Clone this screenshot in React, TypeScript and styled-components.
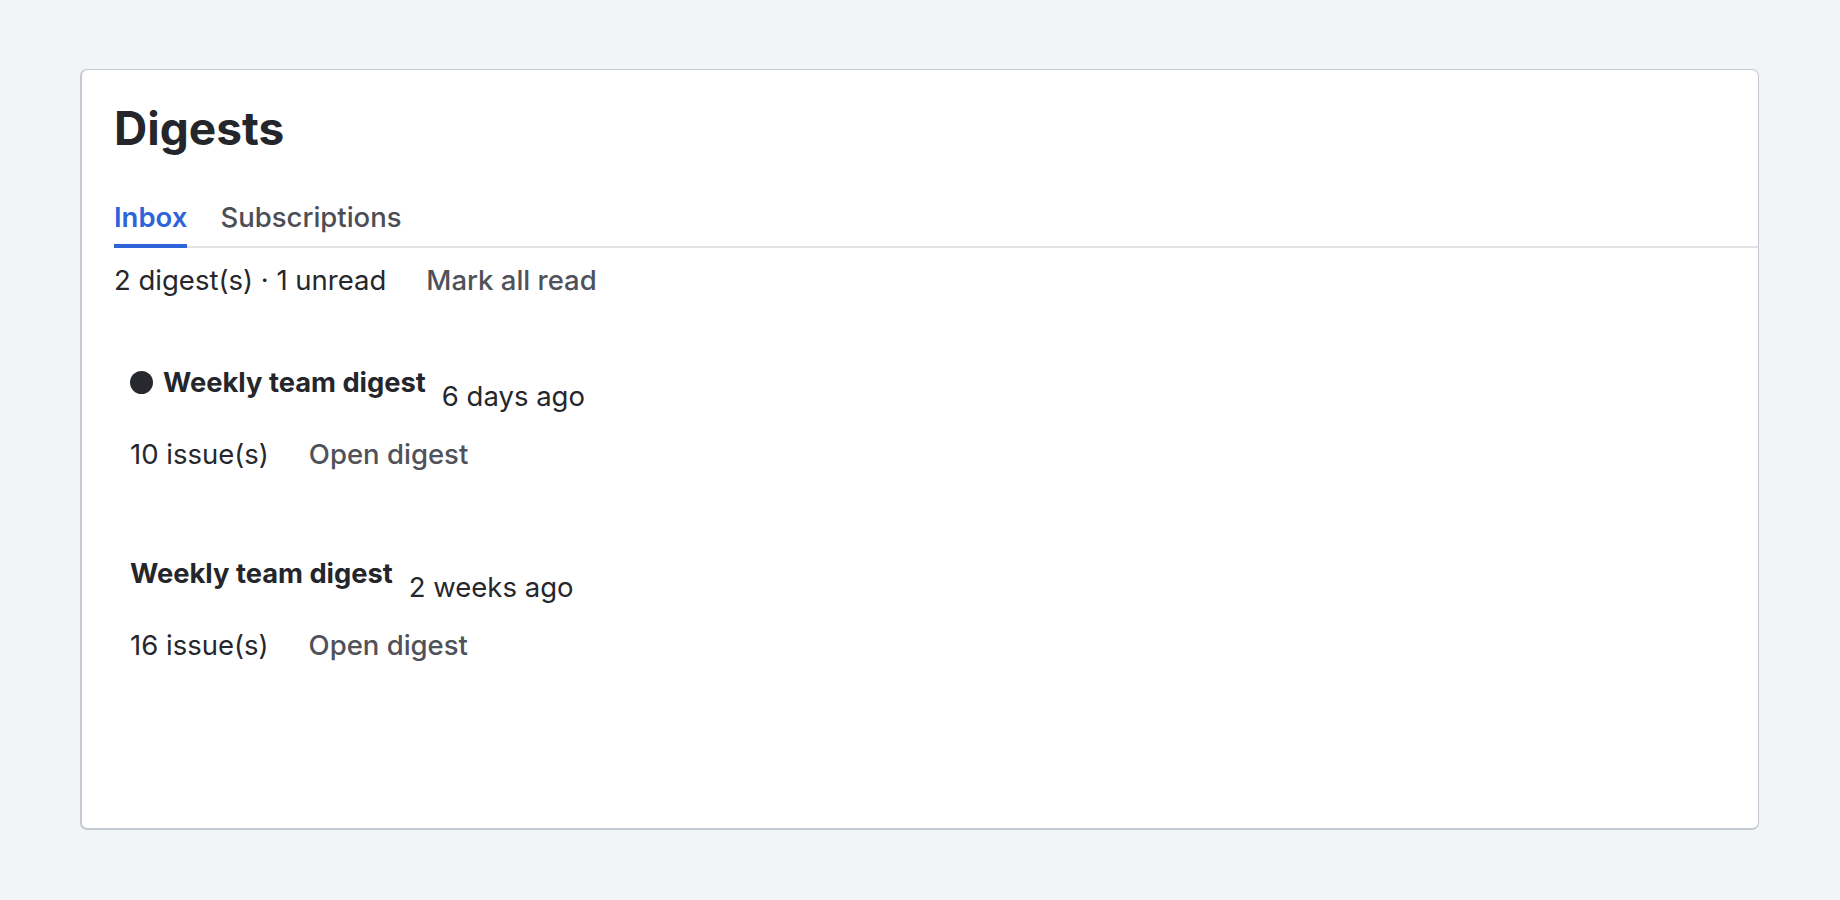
import React from "react";
import styled, { createGlobalStyle } from "styled-components";

const Global = createGlobalStyle`
  html, body { margin: 0; padding: 0; background: #f3f4f6; }
  body { font-family: Inter, "Noto Sans", sans-serif; color: #25272c; }
  * { box-sizing: border-box; }
`;

const Page = styled.div`
  height: 900px;
  padding: 69px 81px 70px 80px;
  display: flex;
`;

const Card = styled.section`
  flex: 1;
  background: #ffffff;
  border: 1px solid #c4cad3;
  border-left-width: 2px;
  border-bottom-width: 2px;
  border-radius: 7px;
  padding: 30px 0 0 32px;
  display: flex;
  flex-direction: column;
`;

const Title = styled.h1`
  margin: 0;
  font-size: 46px;
  font-weight: 700;
  line-height: normal;
  color: #24262b;
`;

const TabBar = styled.nav`
  margin-top: 34px;
  display: flex;
  gap: 33px;
  border-bottom: 2px solid #e0e2e6;
`;

const Tab = styled.button<{ $active?: boolean }>`
  appearance: none;
  background: none;
  border: none;
  border-bottom: 4px solid ${(p) => (p.$active ? "#2f64d9" : "transparent")};
  margin-bottom: -2px;
  padding: 10px 0 10px;
  font-family: inherit;
  font-size: 27.5px;
  font-weight: ${(p) => (p.$active ? 600 : 500)};
  line-height: normal;
  color: ${(p) => (p.$active ? "#2f64d9" : "#4b4e56")};
  cursor: pointer;
`;

const Summary = styled.div`
  margin-top: 15px;
  display: flex;
  align-items: baseline;
  gap: 40px;
  font-size: 27.5px;
  line-height: normal;
`;

const LinkButton = styled.button`
  appearance: none;
  background: none;
  border: none;
  padding: 0;
  font-family: inherit;
  font-size: 27.5px;
  font-weight: 500;
  line-height: normal;
  color: #4f525a;
  cursor: pointer;
`;

const List = styled.ul`
  list-style: none;
  margin: 53px 0 0;
  padding: 0;
  display: flex;
  flex-direction: column;
  gap: 54px;
`;

const Item = styled.li`
  padding: 16px;
  display: flex;
  flex-direction: column;
  gap: 24px;
`;

const ItemHead = styled.div`
  display: flex;
  align-items: flex-start;
  gap: 16px;
`;

const ItemTitle = styled.h3`
  margin: 0;
  display: flex;
  align-items: center;
  gap: 10px;
  font-size: 27.3px;
  font-weight: 700;
  line-height: normal;
  color: #24262b;
`;

const UnreadDot = styled.span`
  width: 23px;
  height: 23px;
  border-radius: 50%;
  background: #27292e;
  flex: none;
`;

const Time = styled.span`
  margin-top: 13px;
  font-size: 27.5px;
  line-height: normal;
`;

const Meta = styled.div`
  display: flex;
  align-items: baseline;
  gap: 40px;
  font-size: 27.5px;
  line-height: normal;
`;

const digests = [
  { id: 1, title: "Weekly team digest", time: "6 days ago", issues: 10, unread: true },
  { id: 2, title: "Weekly team digest", time: "2 weeks ago", issues: 16, unread: false },
];

export default function App() {
  return (
    <>
      <Global />
      <Page>
        <Card>
          <Title>Digests</Title>
          <TabBar>
            <Tab $active>Inbox</Tab>
            <Tab>Subscriptions</Tab>
          </TabBar>
          <Summary>
            <span>2 digest(s) · 1 unread</span>
            <LinkButton>Mark all read</LinkButton>
          </Summary>
          <List>
            {digests.map((d) => (
              <Item key={d.id}>
                <ItemHead>
                  <ItemTitle>
                    {d.unread && <UnreadDot />}
                    {d.title}
                  </ItemTitle>
                  <Time>{d.time}</Time>
                </ItemHead>
                <Meta>
                  <span>{d.issues} issue(s)</span>
                  <LinkButton>Open digest</LinkButton>
                </Meta>
              </Item>
            ))}
          </List>
        </Card>
      </Page>
    </>
  );
}
